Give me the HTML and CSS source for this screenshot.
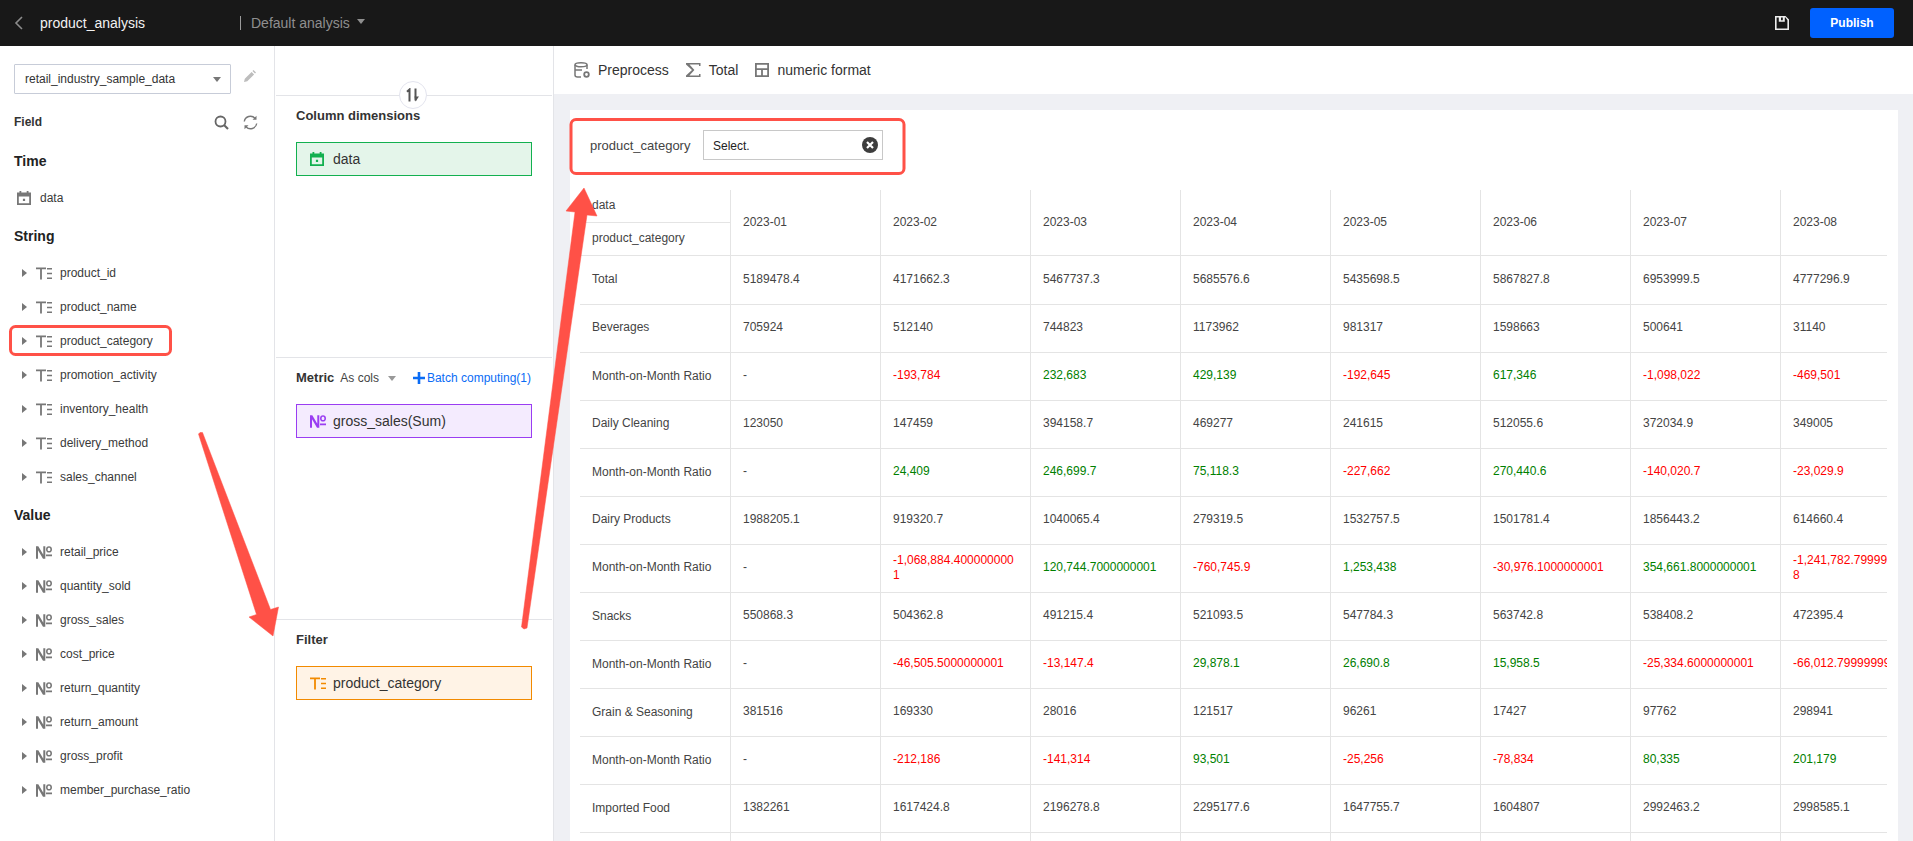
FILE: index.html
```html
<!DOCTYPE html>
<html lang="en">
<head>
<meta charset="utf-8">
<title>product_analysis</title>
<link rel="stylesheet" href="styles.css">
</head>
<body>
<svg class="defs" width="0" height="0" aria-hidden="true">
  <symbol id="i-text" viewBox="0 0 16 12">
    <path d="M0 0h10v1.700H5.900V12H4.100V1.700H0z M11 .4h5v1.600h-5z M11 5.200h5v1.600h-5z M11 10h5v1.600h-5z"/>
  </symbol>
  <symbol id="i-num" viewBox="0 0 16 13">
    <path d="M0 12.800V.2h2.300l5 8.600V.2h2v12.600H7L2 4.200v8.600z M13 .2c1.800 0 3 1.200 3 3.200s-1.200 3.200-3 3.200-3-1.200-3-3.200 1.200-3.200 3-3.200z m0 1.500c-.9 0-1.400.7-1.400 1.700s.5 1.700 1.400 1.700 1.400-.7 1.400-1.700-.5-1.700-1.400-1.700z M10 8.500h6v1.800h-6z"/>
  </symbol>
  <symbol id="i-cal" viewBox="0 0 14 14">
    <path fill-rule="evenodd" d="M2.500 0h1.800v1.500h5.400V0h1.800v1.500H14V14H0V1.500h2.500z M1.800 5.500v6.700h10.400V5.500z M5.900 7.700h2.200v2.200H5.900z"/>
  </symbol>
</svg>

<header class="topbar">
  <svg class="back" viewBox="0 0 10 14" width="10" height="14"><path d="M8 1 2 7l6 6" fill="none" stroke="currentColor" stroke-width="1.600"/></svg>
  <div class="title">product_analysis</div>
  <div class="analysis">Default analysis<span class="caret caret-top"></span></div>
  <div class="actions">
    <svg class="save" viewBox="0 0 14 14" width="14" height="14"><path d="M0 0h10.500L14 3.500V14H0z M1.600 1.600v10.800h10.800V4.200L10.600 1.600H9.800v4.200H3.800V1.600z M6 1.600v2.600h1.800V1.600z" fill-rule="evenodd" fill="currentColor"/></svg>
    <button class="publish">Publish</button>
  </div>
</header>

<div class="workspace">
  <aside class="fields">
    <div class="dataset-row">
      <div class="dataset">retail_industry_sample_data<span class="caret"></span></div>
      <svg class="pencil" viewBox="0 0 12 12" width="12" height="12"><path d="M0 12l.8-3.300L7.600 1.900l2.500 2.500L3.300 11.200z M8.500 1l1-1L12 2.500l-1 1z" fill="currentColor"/></svg>
    </div>
    <div class="field-head">
      <span>Field</span>
      <svg class="tool" viewBox="0 0 15 15" width="15" height="15"><circle cx="6.500" cy="6.500" r="5" fill="none" stroke="currentColor" stroke-width="1.800"/><path d="M10 10l4 4" stroke="currentColor" stroke-width="2.200"/></svg>
      <svg class="tool tool-refresh" viewBox="0 0 15 15" width="15" height="15"><path d="M1.300 6.500A6.200 6.200 0 0 1 12 3.300M13.700 8.500A6.200 6.200 0 0 1 3 11.700" fill="none" stroke="currentColor" stroke-width="1.400"/><path d="M13.500 .8v4h-4zM1.500 14.200v-4h4z" fill="currentColor"/></svg>
    </div>
    <h3 class="group group-first">Time</h3>
    <div class="row row-time"><svg class="ico-cal"><use href="#i-cal"/></svg>data</div>
    <h3 class="group">String</h3>
    <div class="row"><span class="tri"></span><svg class="ico"><use href="#i-text"/></svg>product_id</div>
    <div class="row"><span class="tri"></span><svg class="ico"><use href="#i-text"/></svg>product_name</div>
    <div class="row"><span class="tri"></span><svg class="ico"><use href="#i-text"/></svg>product_category</div>
    <div class="row"><span class="tri"></span><svg class="ico"><use href="#i-text"/></svg>promotion_activity</div>
    <div class="row"><span class="tri"></span><svg class="ico"><use href="#i-text"/></svg>inventory_health</div>
    <div class="row"><span class="tri"></span><svg class="ico"><use href="#i-text"/></svg>delivery_method</div>
    <div class="row"><span class="tri"></span><svg class="ico"><use href="#i-text"/></svg>sales_channel</div>
    <h3 class="group">Value</h3>
    <div class="row"><span class="tri"></span><svg class="ico"><use href="#i-num"/></svg>retail_price</div>
    <div class="row"><span class="tri"></span><svg class="ico"><use href="#i-num"/></svg>quantity_sold</div>
    <div class="row"><span class="tri"></span><svg class="ico"><use href="#i-num"/></svg>gross_sales</div>
    <div class="row"><span class="tri"></span><svg class="ico"><use href="#i-num"/></svg>cost_price</div>
    <div class="row"><span class="tri"></span><svg class="ico"><use href="#i-num"/></svg>return_quantity</div>
    <div class="row"><span class="tri"></span><svg class="ico"><use href="#i-num"/></svg>return_amount</div>
    <div class="row"><span class="tri"></span><svg class="ico"><use href="#i-num"/></svg>gross_profit</div>
    <div class="row"><span class="tri"></span><svg class="ico"><use href="#i-num"/></svg>member_purchase_ratio</div>
  </aside>

  <section class="shelves">
    <div class="shelf-top"></div>
    <div class="shelf shelf-fixed">
      <div class="swap"><svg viewBox="0 0 14 14" width="14" height="14"><path d="M3.500 13.500V1.500L1 3.800" fill="none" stroke="currentColor" stroke-width="2"/><path d="M9.500 .5v12" fill="none" stroke="currentColor" stroke-width="2"/><path d="M8.500 8.500h4.500L9.500 13.500z" fill="currentColor"/></svg></div>
      <div class="shelf-head">Column dimensions</div>
      <div class="pill pill-green"><svg class="ico-cal"><use href="#i-cal"/></svg>data</div>
    </div>
    <div class="shelf shelf-fixed">
      <div class="shelf-head metric-head">
        <span>Metric</span>
        <span class="as-cols">As cols<span class="caret caret-soft"></span></span>
        <span class="batch"><svg viewBox="0 0 12 12" width="12" height="12"><path d="M4.700 0h2.600v4.700H12v2.600H7.300V12H4.700V7.300H0V4.700h4.700z" fill="currentColor"/></svg>Batch computing(1)</span>
      </div>
      <div class="pill pill-purple"><svg class="ico"><use href="#i-num"/></svg>gross_sales(Sum)</div>
    </div>
    <div class="shelf">
      <div class="shelf-head">Filter</div>
      <div class="pill pill-orange"><svg class="ico"><use href="#i-text"/></svg>product_category</div>
    </div>
  </section>

  <main class="main">
    <div class="toolbar">
      <div class="tool-item">
        <svg viewBox="0 0 16 16" width="16" height="16"><g fill="none" stroke="currentColor" stroke-width="1.500"><ellipse cx="7" cy="2.800" rx="6" ry="2"/><path d="M1 2.800V13q0 2 2.500 2H7M13 2.800V7M1 8h7"/><circle cx="12.500" cy="12.500" r="2.300" stroke-width="1.800"/></g></svg>
        Preprocess
      </div>
      <div class="tool-item">
        <svg viewBox="0 0 15 14" width="15" height="14"><path d="M0 0h14.500v3h-1.500V1.500H3.500L8.400 7l-5 5.500h9.600V11h1.500v3H0v-1.500L6 7 0 1.500z" fill="currentColor"/></svg>
        Total
      </div>
      <div class="tool-item">
        <svg viewBox="0 0 14 14" width="14" height="14"><path d="M0 0h14v14H0z M1.800 1.800v3.400h10.400V1.800z M1.800 7v5.200h4.300V7z M7.900 7v5.200h4.300V7z" fill="currentColor" fill-rule="evenodd"/></svg>
        numeric format
      </div>
    </div>
    <div class="canvas">
      <div class="card">
        <div class="filter-bar">
          <span class="filter-label">product_category</span>
          <div class="filter-select"><span class="select-text">Select.</span>
            <svg viewBox="0 0 16 16" width="16" height="16"><circle cx="8" cy="8" r="8" fill="#3d3d3d"/><path d="M5 5l6 6M11 5l-6 6" stroke="#fff" stroke-width="2.200"/></svg>
          </div>
        </div>
        <div class="table-wrap">
          <table class="grid">
            <colgroup><col class="c"><col class="c"><col class="c"><col class="c"><col class="c"><col class="c"><col class="c"><col class="c"><col class="c"></colgroup>
            <thead>
              <tr>
                <th class="corner"><div class="corner-top">data</div><div class="corner-bottom">product_category</div></th>
                <th>2023-01</th><th>2023-02</th><th>2023-03</th><th>2023-04</th><th>2023-05</th><th>2023-06</th><th>2023-07</th><th>2023-08</th>
              </tr>
            </thead>
            <tbody>
              <tr class="first lift"><td>Total</td><td>5189478.4</td><td>4171662.3</td><td>5467737.3</td><td>5685576.6</td><td>5435698.5</td><td>5867827.8</td><td>6953999.5</td><td>4777296.9</td></tr>
              <tr class="lift"><td>Beverages</td><td>705924</td><td>512140</td><td>744823</td><td>1173962</td><td>981317</td><td>1598663</td><td>500641</td><td>31140</td></tr>
              <tr><td>Month-on-Month Ratio</td><td>-</td><td class="neg">-193,784</td><td class="pos">232,683</td><td class="pos">429,139</td><td class="neg">-192,645</td><td class="pos">617,346</td><td class="neg">-1,098,022</td><td class="neg">-469,501</td></tr>
              <tr class="lift"><td>Daily Cleaning</td><td>123050</td><td>147459</td><td>394158.7</td><td>469277</td><td>241615</td><td>512055.6</td><td>372034.9</td><td>349005</td></tr>
              <tr><td>Month-on-Month Ratio</td><td>-</td><td class="pos">24,409</td><td class="pos">246,699.7</td><td class="pos">75,118.3</td><td class="neg">-227,662</td><td class="pos">270,440.6</td><td class="neg">-140,020.7</td><td class="neg">-23,029.9</td></tr>
              <tr class="lift"><td>Dairy Products</td><td>1988205.1</td><td>919320.7</td><td>1040065.4</td><td>279319.5</td><td>1532757.5</td><td>1501781.4</td><td>1856443.2</td><td>614660.4</td></tr>
              <tr class="lift"><td>Month-on-Month Ratio</td><td>-</td><td class="neg">-1,068,884.4000000001</td><td class="pos">120,744.7000000001</td><td class="neg">-760,745.9</td><td class="pos">1,253,438</td><td class="neg">-30,976.1000000001</td><td class="pos">354,661.8000000001</td><td class="neg">-1,241,782.7999999998</td></tr>
              <tr><td>Snacks</td><td>550868.3</td><td>504362.8</td><td>491215.4</td><td>521093.5</td><td>547784.3</td><td>563742.8</td><td>538408.2</td><td>472395.4</td></tr>
              <tr><td>Month-on-Month Ratio</td><td>-</td><td class="neg">-46,505.5000000001</td><td class="neg">-13,147.4</td><td class="pos">29,878.1</td><td class="pos">26,690.8</td><td class="pos">15,958.5</td><td class="neg">-25,334.6000000001</td><td class="neg">-66,012.79999999999</td></tr>
              <tr><td>Grain &amp; Seasoning</td><td>381516</td><td>169330</td><td>28016</td><td>121517</td><td>96261</td><td>17427</td><td>97762</td><td>298941</td></tr>
              <tr><td>Month-on-Month Ratio</td><td>-</td><td class="neg">-212,186</td><td class="neg">-141,314</td><td class="pos">93,501</td><td class="neg">-25,256</td><td class="neg">-78,834</td><td class="pos">80,335</td><td class="pos">201,179</td></tr>
              <tr><td>Imported Food</td><td>1382261</td><td>1617424.8</td><td>2196278.8</td><td>2295177.6</td><td>1647755.7</td><td>1604807</td><td>2992463.2</td><td>2998585.1</td></tr>
              <tr><td></td><td></td><td></td><td></td><td></td><td></td><td></td><td></td><td></td></tr>
            </tbody>
          </table>
        </div>
      </div>
    </div>
  </main>
</div>

<svg class="annotations" viewBox="0 0 1913 841" width="1913" height="841" aria-hidden="true">
  <rect class="mark" x="10.500" y="326.500" width="160" height="28" rx="5"/>
  <rect class="mark" x="571" y="119.500" width="333" height="54" rx="5"/>
  <polygon class="arrow" points="198.500,434 200,432.500 202.500,432.500 270.500,609.500 278.500,607 273,636 249,617 256.500,614.500"/>
  <polygon class="arrow" points="521.500,627 524,629 527,628 587,215 597,216 584,188 566,211 575,212"/>
</svg>
</body>
</html>
```

FILE: styles.css
```css
* { box-sizing: border-box; }
html, body { margin: 0; height: 100%; }
body {
  position: relative;
  display: flex;
  flex-direction: column;
  height: 841px;
  overflow: hidden;
  font-family: "Liberation Sans", Arial, sans-serif;
  font-size: 12px;
  color: #333;
  background: #fff;
}
.defs { position: absolute; }

/* top bar */
.topbar {
  flex: none;
  display: flex;
  align-items: center;
  height: 46px;
  padding-left: 14px;
  background: #181818;
}
.back { color: #8c8c8c; margin-right: 16px; flex: none; }
.title { width: 200px; font-size: 14px; color: #f2f2f2; }
.analysis {
  display: flex;
  align-items: center;
  height: 14px;
  padding-left: 10px;
  border-left: 1px solid #9a9a9a;
  font-size: 14px;
  color: #8f8f8f;
}
.caret {
  display: inline-block;
  width: 0;
  height: 0;
  border: 4px solid transparent;
  border-top: 5px solid #777;
  border-bottom: 0;
}
.caret-top { margin-left: 7px; margin-top: -3px; border-top-color: #8f8f8f; }
.actions { margin-left: auto; display: flex; align-items: center; }
.save { color: #eee; margin-right: 21px; }
.publish {
  width: 84px;
  height: 30px;
  margin-right: 19px;
  border: 0;
  border-radius: 3px;
  background: #0061ff;
  color: #fff;
  font: bold 12px "Liberation Sans", Arial, sans-serif;
}

/* layout */
.workspace { flex: 1; display: flex; min-height: 0; }

/* field list */
.fields {
  flex: none;
  width: 275px;
  padding: 18px 0 0 14px;
  border-right: 1px solid #e3e4e8;
}
.dataset-row { display: flex; align-items: center; height: 30px; }
.dataset {
  display: flex;
  align-items: center;
  justify-content: space-between;
  width: 217px;
  height: 30px;
  padding: 0 9px 0 10px;
  border: 1px solid #c7ccd8;
  border-radius: 1px;
  color: #333;
}
.pencil { margin: -6px 0 0 13px; color: #bdbdbd; }
.field-head {
  display: flex;
  align-items: center;
  height: 20px;
  margin-top: 18px;
  font-weight: bold;
  color: #333;
}
.field-head span { flex: 1; }
.tool { color: #666; }
.tool-refresh { margin: 0 16px 0 14px; color: #777; }
.group { margin: 11px 0 10px; height: 20px; font-size: 14px; line-height: 20px; font-weight: bold; color: #222; }
.group-first { margin-top: 19px; }
.row { display: flex; align-items: center; height: 34px; padding-left: 8px; color: #3a3a3a; }
.row-time { padding-left: 3px; }
.tri {
  width: 0;
  height: 0;
  margin-right: 9px;
  border: 4px solid transparent;
  border-left: 5px solid #777;
  border-right: 0;
}
.ico { width: 16px; height: 13px; margin-right: 8px; fill: #777; flex: none; }
.ico-cal { width: 14px; height: 14px; margin-right: 9px; fill: #777; flex: none; }

/* shelves */
.shelves {
  flex: none;
  width: 279px;
  display: flex;
  flex-direction: column;
  border-right: 1px solid #e3e4e8;
}
.shelf-top { height: 49px; flex: none; }
.shelf {
  position: relative;
  flex: 1;
  margin: 0 1px 0 1px;
  padding: 10px 21px 0 20px;
  border-top: 1px solid #e3e4e8;
}
.shelf-fixed { flex: none; height: 262px; }
.shelf-head { height: 20px; margin-bottom: 16px; line-height: 20px; font-size: 13px; font-weight: bold; color: #333; }
.swap {
  position: absolute;
  top: -15px;
  left: 123px;
  display: flex;
  align-items: center;
  justify-content: center;
  width: 28px;
  height: 28px;
  border: 1px solid #e3e4ee;
  border-radius: 50%;
  background: #fff;
  color: #555;
}
.metric-head { display: flex; align-items: center; }
.as-cols { display: flex; align-items: center; margin-left: 6px; font-size: 12px; font-weight: normal; color: #444; }
.caret-soft { margin-left: 9px; border-top-color: #999; }
.batch { display: flex; align-items: center; margin-left: auto; font-size: 12px; font-weight: normal; color: #0a6cf5; }
.batch svg { margin-right: 2px; }
.pill {
  display: flex;
  align-items: center;
  width: 236px;
  height: 34px;
  padding-left: 13px;
  border: 1px solid;
  font-size: 14px;
  color: #333;
}
.pill .ico { margin-right: 7px; }
.pill .ico-cal { margin-right: 9px; }
.pill-green { background: #e4f5ea; border-color: #12b04f; }
.pill-green .ico-cal { fill: #12b04f; }
.pill-purple { background: #f4ebfe; border-color: #9a3df2; }
.pill-purple .ico { fill: #9a3df2; }
.pill-orange { background: #fff3e6; border-color: #f28a00; }
.pill-orange .ico { fill: #f28a00; }

/* main */
.main { flex: 1; min-width: 0; display: flex; flex-direction: column; }
.toolbar {
  flex: none;
  display: flex;
  align-items: center;
  gap: 17px;
  height: 48px;
  padding-left: 20px;
  font-size: 14px;
  color: #333;
}
.tool-item { display: flex; align-items: center; gap: 8px; }
.tool-item svg { color: #777; }
.canvas { flex: 1; min-height: 0; padding: 16px 15px 0 16px; background: #eff0f4; }
.card { height: 100%; background: #fff; overflow: hidden; }
.filter-bar { display: flex; align-items: center; height: 30px; margin: 20px 0 30px 20px; }
.filter-label { width: 113px; font-size: 13px; color: #444; }
.filter-select {
  display: flex;
  align-items: center;
  justify-content: space-between;
  width: 180px;
  height: 30px;
  padding: 0 4px 0 9px;
  border: 1px solid #c8c8c8;
  color: #222;
}
.select-text { padding-top: 2px; }
.table-wrap { margin: 0 11px 0 10px; overflow: hidden; }
.grid { width: 1350px; table-layout: fixed; border-collapse: separate; border-spacing: 0; font-size: 12px; line-height: 15px; }
.c { width: 150px; }
.grid th, .grid td {
  padding: 0 12px;
  border-left: 1px solid #e4e4e4;
  border-bottom: 1px solid #e4e4e4;
  text-align: left;
  font-weight: normal;
  color: #444;
  word-break: break-all;
  vertical-align: middle;
}
.grid th { height: 66px; }
.grid td { height: 48px; padding-bottom: 2px; }
.grid .first td { height: 49px; }
.grid th:first-child, .grid td:first-child { border-left: 0; }
.grid td:first-child { padding-bottom: 0; }
.grid .lift td:first-child { padding-bottom: 2px; }
.grid .corner { padding: 0; }
.corner-top { height: 33px; padding: 8px 12px 0; border-bottom: 1px solid #e4e4e4; }
.corner-bottom { height: 32px; padding: 8px 12px 0; }
.grid td.neg { color: #f00; }
.grid td.pos { color: #008000; }

/* annotations drawn over the screenshot */
.annotations { position: absolute; left: 0; top: 0; pointer-events: none; }
.mark { fill: none; stroke: #ff5147; stroke-width: 3; }
.arrow { fill: #ff5147; stroke: #ff5147; stroke-width: .5; stroke-linejoin: round; }
```
